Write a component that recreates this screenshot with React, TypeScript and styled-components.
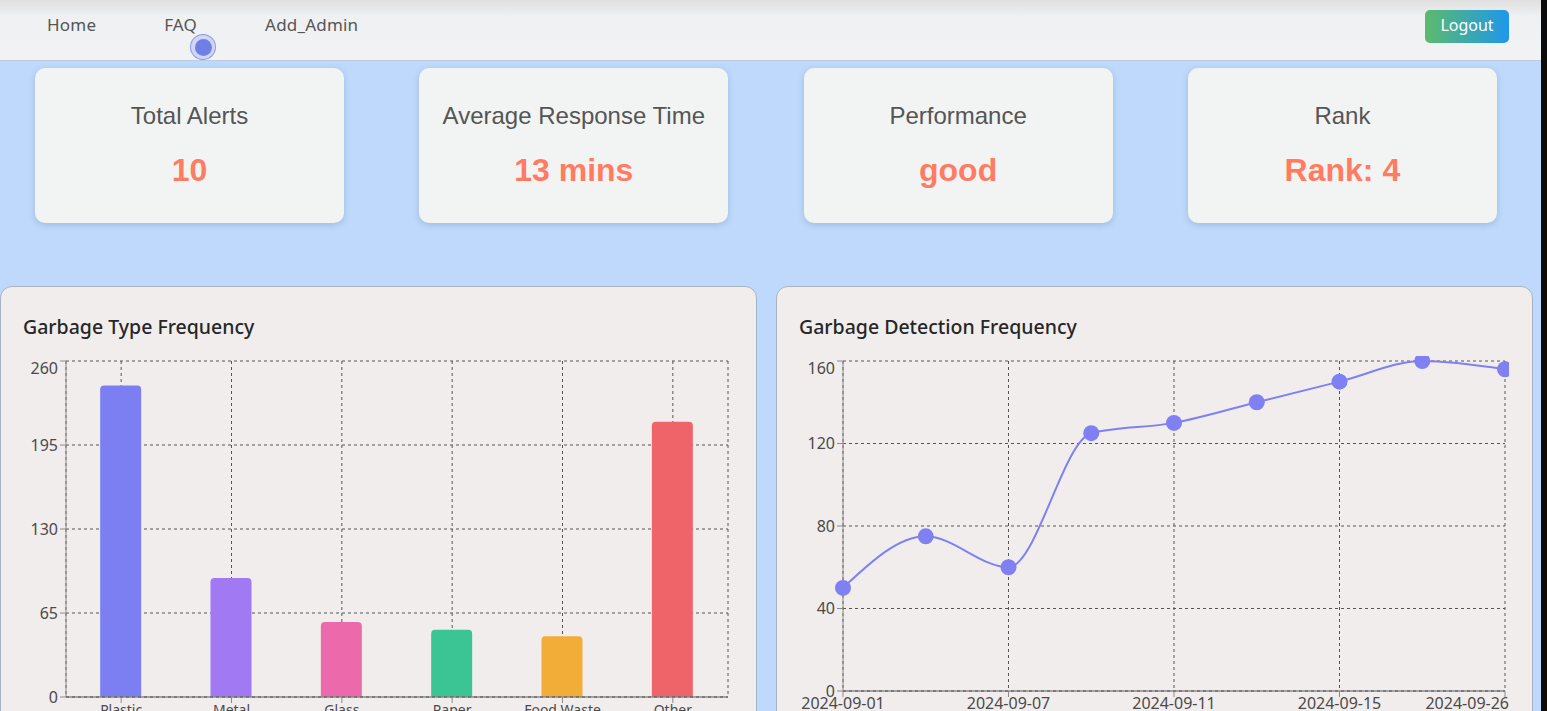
import React from "react";
import styled, { createGlobalStyle } from "styled-components";

const Global = createGlobalStyle`
  html, body { margin: 0; padding: 0; overflow: hidden; background: #0b0b0b; }
  #root { width: 1541px; }
  * { box-sizing: border-box; }
`;

const Page = styled.div`
  width: 1541px;
  height: 711px;
  background: #bed9fb;
  overflow: hidden;
  position: relative;
`;

const Header = styled.header`
  height: 61px;
  display: flex;
  align-items: center;
  justify-content: space-between;
  padding: 0 32px 11px 47px;
  background: linear-gradient(to bottom, #dfdfdf 0px, #eff0f2 16px, #f2f3f5 100%);
  border-bottom: 1px solid #bccbdd;
  position: relative;
`;

const Nav = styled.nav`
  display: flex;
  gap: 68px;
`;

const NavLink = styled.a`
  font-family: "Noto Sans", sans-serif;
  font-size: 17px;
  letter-spacing: 0.2px;
  color: #555;
  text-decoration: none;
`;

const LogoutButton = styled.button`
  width: 84px;
  height: 33px;
  margin-top: 3px;
  border: none;
  border-radius: 5px;
  background: linear-gradient(to right, #5cba6c, #1f97ec);
  color: #fff;
  font-family: "Noto Sans", sans-serif;
  font-size: 16px;
  font-weight: 400;
  padding: 0 0 2px;
`;

const TouchDot = styled.span`
  position: absolute;
  left: 190px;
  top: 34px;
  width: 26px;
  height: 26px;
  border-radius: 50%;
  background: rgba(150, 165, 240, 0.35);
  border: 1px solid rgba(110, 125, 230, 0.7);
  display: flex;
  align-items: center;
  justify-content: center;
  &::after {
    content: "";
    width: 17px;
    height: 17px;
    border-radius: 50%;
    background: #6f7fe8;
  }
`;

const StatsRow = styled.section`
  display: grid;
  grid-template-columns: repeat(4, 309px);
  column-gap: 75.3px;
  padding: 7px 0 0 35px;
  height: 225px;
`;

const StatCard = styled.div`
  height: 155px;
  background: #f2f4f3;
  border-radius: 10px;
  box-shadow: 0 2px 6px rgba(60, 80, 110, 0.22);
  display: flex;
  flex-direction: column;
  align-items: center;
  font-family: "Liberation Sans", Arial, sans-serif;
  padding-top: 34px;
`;

const StatTitle = styled.div`
  font-size: 24px;
  color: #555;
  line-height: 28px;
`;

const StatValue = styled.div`
  margin-top: 21px;
  font-size: 32px;
  font-weight: 700;
  color: #ff7c62;
  line-height: 38px;
`;

const ChartsRow = styled.section`
  display: grid;
  grid-template-columns: 757px 757px;
  column-gap: 19px;
`;

const Panel = styled.div`
  height: 460px;
  background: #f2eded;
  border: 1px solid #a6b3c4;
  border-radius: 12px;
  padding-top: 27px;
`;

const PanelTitle = styled.h3`
  margin: 0 0 0 22px;
  font-family: "Noto Sans", sans-serif;
  font-size: 19.5px;
  font-weight: 500;
  color: #262626;
  line-height: 26px;
`;

const ChartSvg = styled.svg`
  display: block;
  font-family: "Noto Sans", sans-serif;
`;

const GRID = "#555";
const AXIS = "#8a8a8a";
const LABEL = "#4a4a4a";
const FS = 16;

type Bar = { name: string; value: number; color: string };
const bars: Bar[] = [
  { name: "Plastic", value: 241, color: "#7c7ff1" },
  { name: "Metal", value: 92, color: "#a079f3" },
  { name: "Glass", value: 58, color: "#ec69ab" },
  { name: "Paper", value: 52, color: "#3bc594" },
  { name: "Food Waste", value: 47, color: "#f2ad38" },
  { name: "Other", value: 213, color: "#ee6468" },
];

const BarChart: React.FC = () => {
  const L = 65, R = 727, T = 21, B = 357, MAX = 260;
  const band = (R - L) / bars.length;
  const y = (v: number) => B - (v / MAX) * (B - T);
  const ticks = [0, 65, 130, 195, 260];
  const bw = 41;
  return (
    <ChartSvg width={755} height={420}>
      {ticks.filter((t) => t > 0).map((t) => (
        <line key={t} x1={L} x2={R} y1={y(t)} y2={y(t)} stroke={GRID} strokeDasharray="3 3" />
      ))}
      {bars.map((b, i) => (
        <line key={b.name} x1={L + band * (i + 0.5)} x2={L + band * (i + 0.5)} y1={T} y2={B} stroke={GRID} strokeDasharray="3 3" />
      ))}
      <line x1={L} x2={L} y1={T} y2={B} stroke={GRID} strokeDasharray="3 3" />
      <line x1={R} x2={R} y1={T} y2={B} stroke={GRID} strokeDasharray="3 3" />
      {bars.map((b, i) => {
        const cx = L + band * (i + 0.5);
        const top = y(b.value);
        const r = 4;
        const x0 = cx - bw / 2 - 0.5;
        const d = `M${x0},${B} L${x0},${top + r} Q${x0},${top} ${x0 + r},${top} L${x0 + bw - r},${top} Q${x0 + bw},${top} ${x0 + bw},${top + r} L${x0 + bw},${B} Z`;
        return <path key={b.name} d={d} fill={b.color} />;
      })}
      <line x1={L} x2={L} y1={T} y2={B} stroke={AXIS} />
      <line x1={L} x2={R} y1={B} y2={B} stroke={AXIS} strokeWidth={1.5} />
      <line x1={L} x2={R} y1={B} y2={B} stroke={GRID} strokeDasharray="3 3" />
      {ticks.map((t) => (
        <g key={t}>
          <line x1={L - 6} x2={L} y1={y(t)} y2={y(t)} stroke={AXIS} />
          <text x={L - 8} y={y(t) + (t === MAX ? 7 : 0)} dy="0.355em" textAnchor="end" fontSize={FS} fill={LABEL}>
            {t}
          </text>
        </g>
      ))}
      {bars.map((b, i) => {
        const cx = L + band * (i + 0.5);
        return (
          <g key={b.name}>
            <line x1={cx} x2={cx} y1={B} y2={B + 6} stroke={AXIS} />
            <text x={cx} y={B + 8} dy="0.71em" textAnchor="middle" fontSize={14} fill={LABEL}>
              {b.name}
            </text>
          </g>
        );
      })}
    </ChartSvg>
  );
};

type Pt = { x: number; y: number };

function monotonePath(p: Pt[]): string {
  const n = p.length;
  const sign = (v: number) => (v < 0 ? -1 : 1);
  const t: number[] = new Array(n).fill(0);
  for (let i = 1; i < n - 1; i++) {
    const h0 = p[i].x - p[i - 1].x, h1 = p[i + 1].x - p[i].x;
    const s0 = (p[i].y - p[i - 1].y) / h0, s1 = (p[i + 1].y - p[i].y) / h1;
    const pp = (s0 * h1 + s1 * h0) / (h0 + h1);
    t[i] = (sign(s0) + sign(s1)) * Math.min(Math.abs(s0), Math.abs(s1), 0.5 * Math.abs(pp)) || 0;
  }
  const h0 = p[1].x - p[0].x;
  t[0] = (3 * (p[1].y - p[0].y) / h0 - t[1]) / 2;
  const hn = p[n - 1].x - p[n - 2].x;
  t[n - 1] = (3 * (p[n - 1].y - p[n - 2].y) / hn - t[n - 2]) / 2;
  let d = `M${p[0].x},${p[0].y}`;
  for (let i = 0; i < n - 1; i++) {
    const dx = (p[i + 1].x - p[i].x) / 3;
    d += ` C${p[i].x + dx},${p[i].y + dx * t[i]} ${p[i + 1].x - dx},${p[i + 1].y - dx * t[i + 1]} ${p[i + 1].x},${p[i + 1].y}`;
  }
  return d;
}

const series = [
  { date: "2024-09-01", value: 50 },
  { date: "2024-09-04", value: 75 },
  { date: "2024-09-07", value: 60 },
  { date: "2024-09-09", value: 125 },
  { date: "2024-09-11", value: 130 },
  { date: "2024-09-13", value: 140 },
  { date: "2024-09-15", value: 150 },
  { date: "2024-09-20", value: 160 },
  { date: "2024-09-26", value: 156 },
];

const LineChart: React.FC = () => {
  const L = 66, R = 728, T = 21, B = 351, MAX = 160;
  const step = (R - L) / (series.length - 1);
  const y = (v: number) => B - (v / MAX) * (B - T);
  const pts = series.map((s, i) => ({ x: L + step * i, y: y(s.value) }));
  const ticks = [0, 40, 80, 120, 160];
  const xTicks = series.map((s, i) => ({ ...s, i })).filter((s) => s.i % 2 === 0);
  const stroke = "#7f80f1";
  const last = series.length - 1;
  return (
    <ChartSvg width={755} height={420}>
      <defs>
        <clipPath id="plotClip">
          <rect x={L - 10} y={T - 5} width={R - L + 14} height={B - T + 15} />
        </clipPath>
      </defs>
      {ticks.filter((t) => t > 0).map((t) => (
        <line key={t} x1={L} x2={R} y1={y(t)} y2={y(t)} stroke={GRID} strokeDasharray="3 3" />
      ))}
      {xTicks.map((s) => (
        <line key={s.date} x1={L + step * s.i} x2={L + step * s.i} y1={T} y2={B} stroke={GRID} strokeDasharray="3 3" />
      ))}
      <line x1={L} x2={L} y1={T} y2={B} stroke={AXIS} />
      <line x1={L} x2={R} y1={B} y2={B} stroke={AXIS} strokeWidth={1.5} />
      <line x1={L} x2={R} y1={B} y2={B} stroke={GRID} strokeDasharray="3 3" />
      <g clipPath="url(#plotClip)">
        <path d={monotonePath(pts)} fill="none" stroke={stroke} strokeWidth={2} />
        {pts.map((p, i) => (
          <circle key={i} cx={p.x} cy={p.y} r={8} fill={stroke} />
        ))}
      </g>
      {ticks.map((t) => (
        <g key={t}>
          <line x1={L - 6} x2={L} y1={y(t)} y2={y(t)} stroke={AXIS} />
          <text x={L - 8} y={y(t) + (t === MAX ? 7 : 0)} dy="0.355em" textAnchor="end" fontSize={FS} fill={LABEL}>
            {t}
          </text>
        </g>
      ))}
      {xTicks.map((s) => {
        const cx = L + step * s.i;
        const isLast = s.i === last;
        return (
          <g key={s.date}>
            <line x1={cx} x2={cx} y1={B} y2={B + 6} stroke={AXIS} />
            <text
              x={isLast ? R + 4 : cx}
              y={B + 7}
              dy="0.71em"
              textAnchor={isLast ? "end" : "middle"}
              fontSize={FS}
              fill={LABEL}
            >
              {s.date}
            </text>
          </g>
        );
      })}
    </ChartSvg>
  );
};

const stats = [
  { title: "Total Alerts", value: "10" },
  { title: "Average Response Time", value: "13 mins" },
  { title: "Performance", value: "good" },
  { title: "Rank", value: "Rank: 4" },
];

export default function App() {
  return (
    <Page>
      <Global />
      <Header>
        <Nav>
          <NavLink href="#">Home</NavLink>
          <NavLink href="#">FAQ</NavLink>
          <NavLink href="#">Add_Admin</NavLink>
        </Nav>
        <LogoutButton>Logout</LogoutButton>
        <TouchDot />
      </Header>
      <StatsRow>
        {stats.map((s) => (
          <StatCard key={s.title}>
            <StatTitle>{s.title}</StatTitle>
            <StatValue>{s.value}</StatValue>
          </StatCard>
        ))}
      </StatsRow>
      <ChartsRow>
        <Panel>
          <PanelTitle>Garbage Type Frequency</PanelTitle>
          <BarChart />
        </Panel>
        <Panel>
          <PanelTitle>Garbage Detection Frequency</PanelTitle>
          <LineChart />
        </Panel>
      </ChartsRow>
    </Page>
  );
}
